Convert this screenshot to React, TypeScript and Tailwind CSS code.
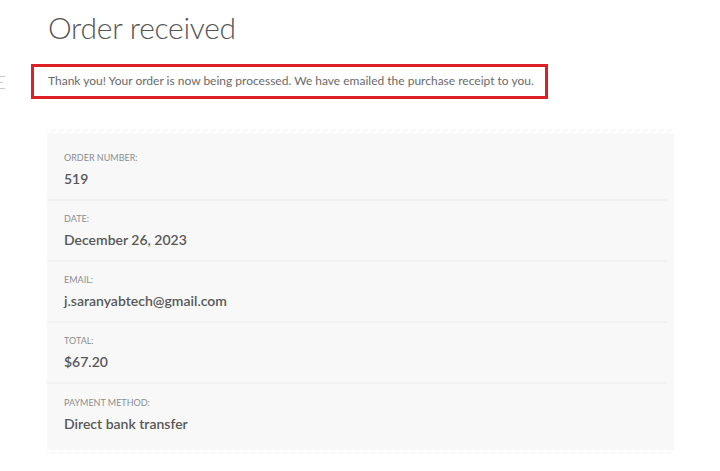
import React from 'react';

const rows = [
  { label: 'Order number:', value: '519' },
  { label: 'Date:', value: 'December 26, 2023' },
  { label: 'Email:', value: 'j.saranyabtech@gmail.com' },
  { label: 'Total:', value: '$67.20' },
  { label: 'Payment method:', value: 'Direct bank transfer' },
];

function Zigzag({ flip }: { flip?: boolean }) {
  return (
    <div
      className={
        flip
          ? 'h-[4px] w-full bg-[linear-gradient(45deg,#f8f8f8_50%,transparent_50%),linear-gradient(-45deg,#f8f8f8_50%,transparent_50%)] bg-[length:8px_8px] bg-top'
          : 'h-[4px] w-full bg-[linear-gradient(135deg,#f8f8f8_50%,transparent_50%),linear-gradient(-135deg,#f8f8f8_50%,transparent_50%)] bg-[length:8px_8px] bg-bottom'
      }
    />
  );
}

export default function App() {
  return (
    <div className="w-[720px] h-[471px] bg-white overflow-hidden font-['Lato',sans-serif] relative">
      {/* cut-off nav marks on the left edge */}
      <div className="absolute left-0 top-[76px] flex flex-col gap-[5px]">
        <span className="block w-[5px] h-[1px] bg-[#c9c9c9]" />
        <span className="block w-[3px] h-[1px] bg-[#c9c9c9]" />
        <span className="block w-[5px] h-[1px] bg-[#c9c9c9]" />
      </div>

      <div className="pl-[48px] pt-[8px]">
        <h1 className="text-[30px] leading-[38px] font-light text-[#555] tracking-[-0.3px]">Order received</h1>
      </div>

      <div className="ml-[31px] mt-[18px] w-[517px] h-[35px] border-[3px] border-[#dd1f26] flex items-center pl-[14px]">
        <p className="text-[12px] text-[#6a6a6a] pb-[2px]">
          Thank you! Your order is now being processed. We have emailed the purchase receipt to you.
        </p>
      </div>

      <div className="ml-[47px] mt-[30px] w-[627px]">
        <Zigzag />
        <div className="bg-[#f8f8f8] pt-[7px] pb-[5px]">
          {rows.map((r, i) => (
            <div
              key={r.label}
              className={
                'pl-[17px] flex flex-col justify-center h-[61px] ' +
                (i < rows.length - 1 ? 'border-b-2 border-[#f1f1f1] mr-[7px]' : '')
              }
            >
              <div className="text-[9px] uppercase text-[#8d8d8d] leading-[12px]">{r.label}</div>
              <div className="text-[14px] font-semibold text-[#575757] leading-[18px] mt-[6px]">{r.value}</div>
            </div>
          ))}
        </div>
        <Zigzag flip />
      </div>
    </div>
  );
}
